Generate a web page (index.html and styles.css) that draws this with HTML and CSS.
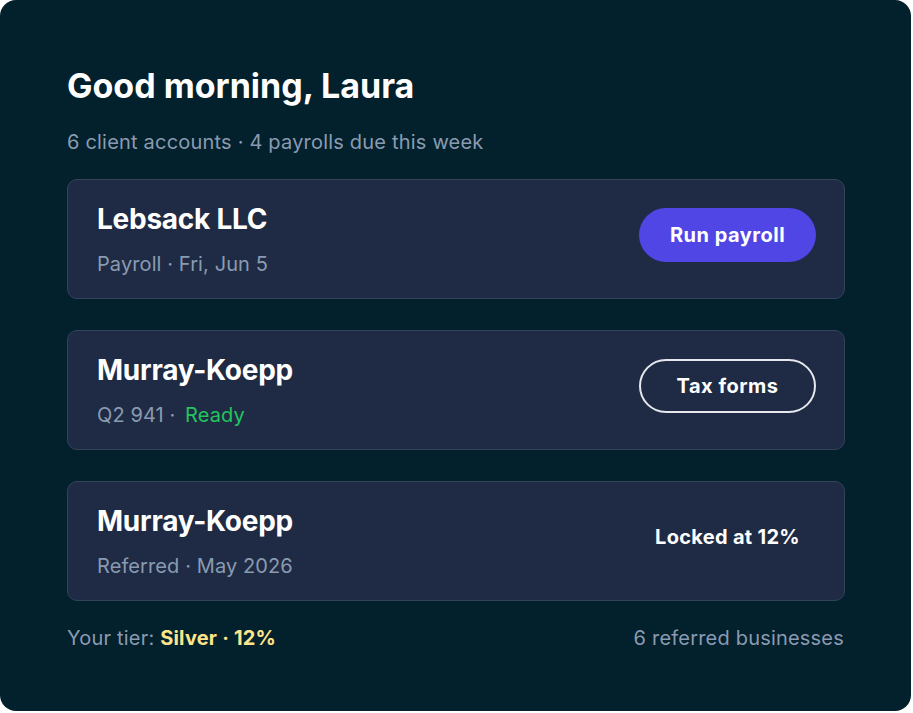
FILE: index.html
```html
<!DOCTYPE html>
<html lang="en">
<head>
    <meta charset="UTF-8">
    <meta name="viewport" content="width=device-width, initial-scale=1.0">
    <title>Clients</title>
    <link rel="stylesheet" href="styles.css">
</head>
<body>
    <div class="panel">
        <h1 class="greeting">Good morning, Laura</h1>
        <p class="summary">6 client accounts · 4 payrolls due this week</p>

        <div class="client-list">
            <div class="client">
                <div class="client-info">
                    <div class="client-name">Lebsack LLC</div>
                    <div class="client-meta">Payroll · Fri, Jun 5</div>
                </div>
                <button class="btn btn-primary">Run payroll</button>
            </div>

            <div class="client">
                <div class="client-info">
                    <div class="client-name">Murray-Koepp</div>
                    <div class="client-meta">Q2 941 · <span class="ready">Ready</span></div>
                </div>
                <button class="btn btn-outline">Tax forms</button>
            </div>

            <div class="client">
                <div class="client-info">
                    <div class="client-name">Murray-Koepp</div>
                    <div class="client-meta">Referred · May 2026</div>
                </div>
                <div class="locked">Locked at 12%</div>
            </div>
        </div>

        <div class="footer">
            <span>Your tier: <strong class="tier">Silver · 12%</strong></span>
            <span>6 referred businesses</span>
        </div>
    </div>
</body>
</html>
```

FILE: styles.css
```css
body {
    margin: 0;
    background-color: #ffffff;
    font-family: Inter, "Liberation Sans", sans-serif;
}

.panel {
    width: 911px;
    height: 711px;
    box-sizing: border-box;
    padding: 66px 66px 0 67px;
    background-color: #03202d; /* deep navy */
    border-radius: 16px;
    color: #ffffff;
}

.greeting {
    margin: 0;
    font-size: 34px;
    line-height: 40px;
    font-weight: 700;
    letter-spacing: 0;
}

.summary {
    margin: 24px 0 25px;
    font-size: 20px;
    line-height: 24px;
    color: #8a9bb1;
    letter-spacing: 0.2px;
}

.client-list {
    display: flex;
    flex-direction: column;
    gap: 31px;
}

.client {
    display: flex;
    align-items: center;
    justify-content: space-between;
    padding: 22px 28px 22px 29px;
    background-color: #1f2b44;
    border: 1px solid #35435a;
    border-radius: 10px;
}

.client-name {
    font-size: 28px;
    line-height: 34px;
    font-weight: 700;
    letter-spacing: -0.25px;
}

.client-meta {
    margin-top: 16px;
    font-size: 20px;
    line-height: 24px;
    color: #8a9bb1;
    letter-spacing: 0.1px;
}

.ready {
    margin-left: 4px;
    color: #22c55e;
}

.btn {
    width: 177px;
    height: 54px;
    margin-bottom: 9px;
    border-radius: 27px;
    font-family: inherit;
    font-size: 20px;
    font-weight: 700;
    letter-spacing: 0.5px;
    color: #ffffff;
    cursor: pointer;
}

.btn-primary {
    background-color: #4f46e5;
    border: none;
}

.btn-outline {
    background-color: transparent;
    border: 2px solid #e6e8ee;
}

.locked {
    width: 177px;
    margin-bottom: 9px;
    text-align: center;
    font-size: 20px;
    font-weight: 700;
    letter-spacing: 0.3px;
}

.footer {
    display: flex;
    justify-content: space-between;
    margin-top: 25px;
    padding-right: 1px;
    font-size: 20px;
    line-height: 24px;
    color: #8a9bb1;
    letter-spacing: 0.2px;
}

.tier {
    color: #fde68a;
}
```
